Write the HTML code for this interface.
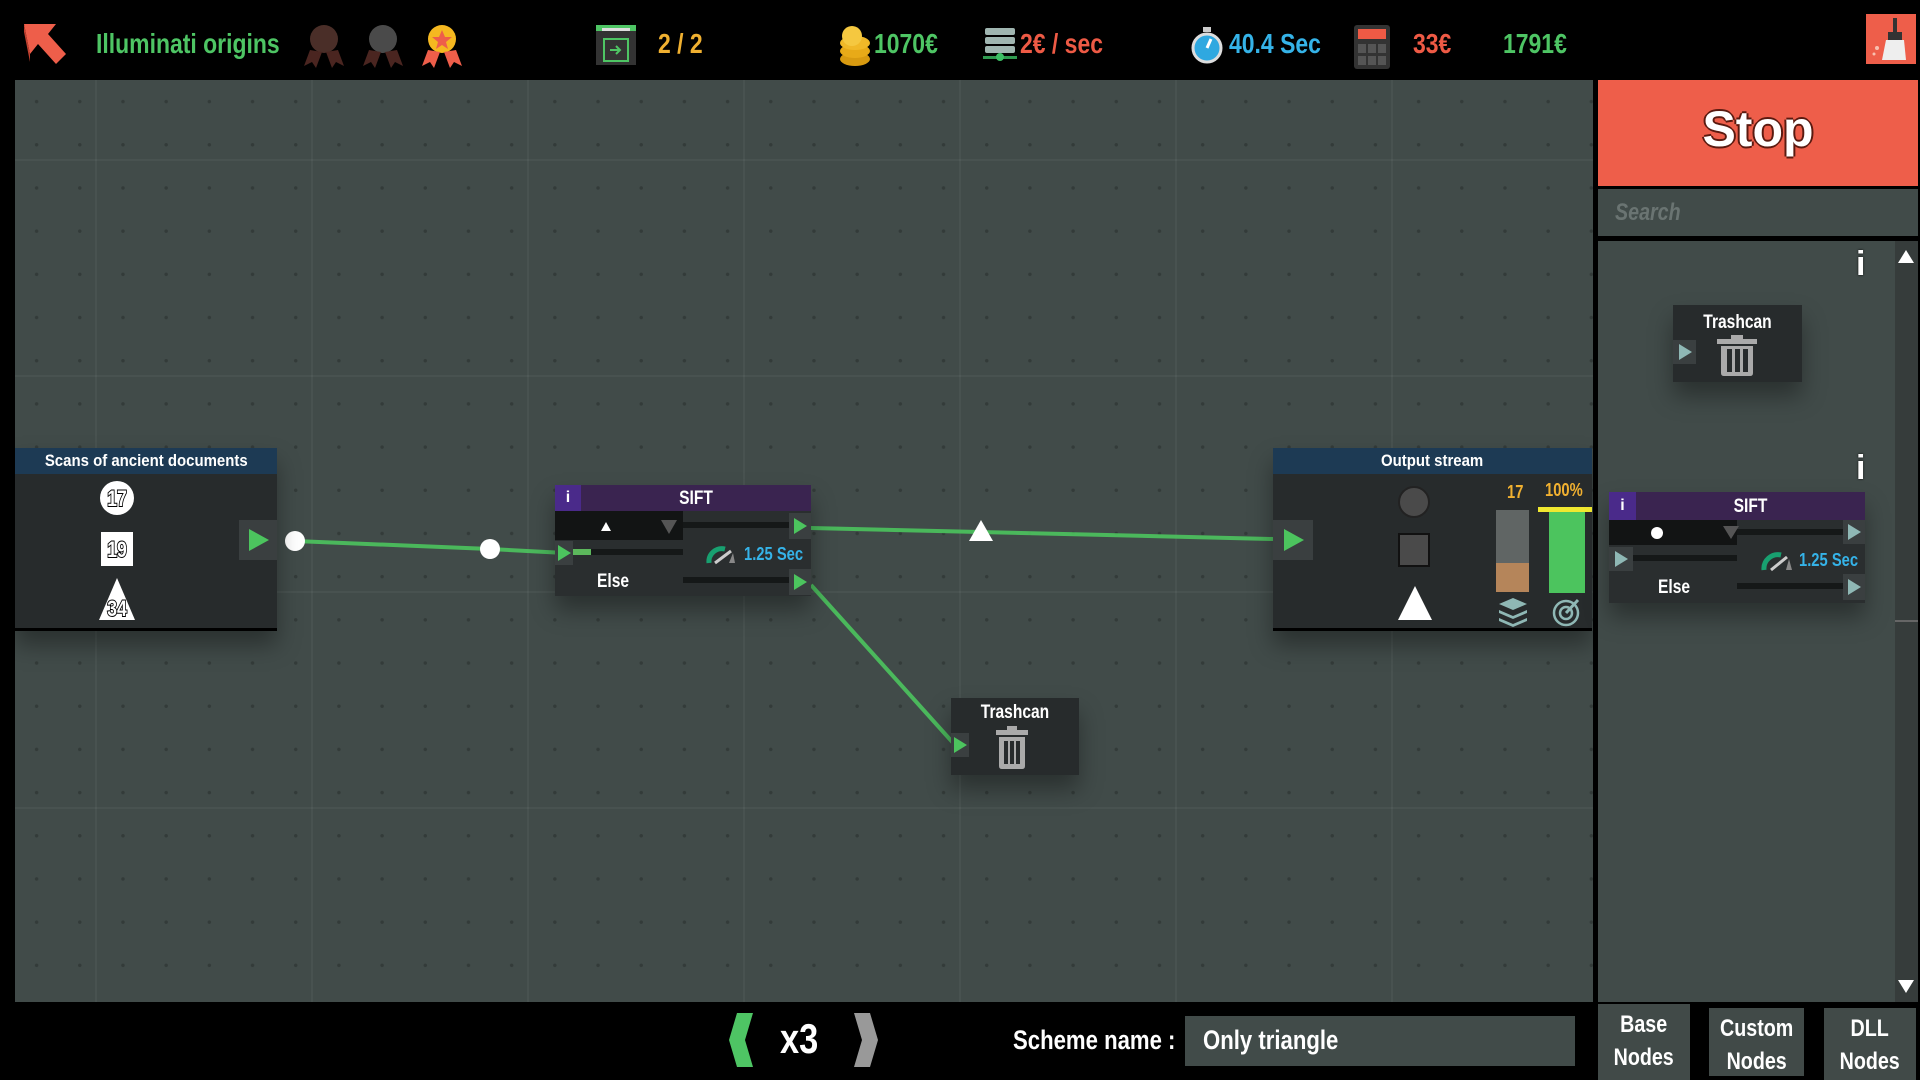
<!DOCTYPE html>
<html><head><meta charset="utf-8"><style>
*{margin:0;padding:0;box-sizing:border-box}
body{width:1920px;height:1080px;background:#000;position:relative;overflow:hidden;font-family:"Liberation Sans",sans-serif;font-weight:bold;color:#fff}
.a{position:absolute}
.t{position:absolute;white-space:nowrap;line-height:1;transform:scaleX(.82);transform-origin:left center}
.c{transform-origin:center center}
#canvas{left:15px;top:80px;width:1578px;height:922px;background-color:#414b49;
background-image:linear-gradient(90deg,rgba(255,255,255,.04) 2px,transparent 2px),linear-gradient(rgba(255,255,255,.04) 2px,transparent 2px),radial-gradient(circle,rgba(0,0,0,.22) 1.5px,transparent 2px);
background-size:216px 216px,216px 216px,43.2px 43.2px;background-position:80px 0,0 79px,0 0}
.node{position:absolute;background:#272b2c;box-shadow:0 14px 22px rgba(0,0,0,.35)}
.hdr{position:absolute;left:0;top:0;right:0;background:#1d3a54;text-align:center;font-size:17px;line-height:26px}
.hdr span{display:inline-block;transform:scaleX(.88)}
.port{position:absolute;background:#3a3f40}
.tri{width:0;height:0;border-top:11px solid transparent;border-bottom:11px solid transparent;border-left:20px solid #4cc45e;position:absolute}
.tris{width:0;height:0;border-top:8px solid transparent;border-bottom:8px solid transparent;border-left:13px solid #4cc45e;position:absolute}
.tab{position:absolute;top:1004px;height:76px;background:#414a48;text-align:center;font-size:24px;line-height:33px;padding-top:4px}
.tab span{display:inline-block;transform:scaleX(.82)}
</style></head><body>

<!-- top bar -->
<svg class="a" style="left:22px;top:22px" width="46" height="44" viewBox="0 0 46 44"><path d="M2 2 L34 2 L26 12 L44 32 L34 42 L16 22 L8 32 Z" fill="#ee5e4a"/><path d="M2 2 L8 32 L8 40 L2 10Z" fill="#c0402f"/></svg>
<div class="t" style="left:96px;top:30px;font-size:28px;color:#4ec564">Illuminati origins</div>
<svg class="a" style="left:300px;top:22px" width="170" height="48">
<g><circle cx="24" cy="17" r="14" fill="#4a2e28"/><path d="M10 28 L4 44 L12 40 L16 46 L22 30Z M38 28 L44 44 L36 40 L32 46 L26 30Z" fill="#4a2520"/></g>
<g transform="translate(59,0)"><circle cx="24" cy="17" r="14" fill="#4a4a4a"/><path d="M10 28 L4 44 L12 40 L16 46 L22 30Z M38 28 L44 44 L36 40 L32 46 L26 30Z" fill="#4a2520"/></g>
<g transform="translate(118,0)"><circle cx="24" cy="17" r="14" fill="#f5b820"/><polygon points="24,8 27,15 34,15 28,20 30,27 24,23 18,27 20,20 14,15 21,15" fill="#ee5e4a"/><path d="M10 28 L4 44 L12 40 L16 46 L22 30Z M38 28 L44 44 L36 40 L32 46 L26 30Z" fill="#ee5e4a"/></g>
</svg>
<svg class="a" style="left:596px;top:25px" width="40" height="40"><rect width="40" height="40" fill="#333"/><rect x="0" y="0" width="40" height="6" fill="#4ec564"/><rect x="6" y="3" width="28" height="3" fill="#ddd"/><rect x="8" y="14" width="24" height="22" fill="none" stroke="#4ec564" stroke-width="2"/><path d="M14 25h10m-4-4l4 4-4 4" stroke="#4ec564" stroke-width="2" fill="none"/></svg>
<div class="t" style="left:658px;top:30px;font-size:28px;color:#f0b030">2 / 2</div>
<svg class="a" style="left:836px;top:25px" width="38" height="42"><ellipse cx="19" cy="34" rx="15" ry="7" fill="#d89a10"/><ellipse cx="19" cy="26" rx="15" ry="7" fill="#e8aa18"/><ellipse cx="19" cy="18" rx="15" ry="7" fill="#f0b828"/><circle cx="16" cy="11" r="10" fill="#f5c840"/></svg>
<div class="t" style="left:874px;top:30px;font-size:28px;color:#4ec564">1070€</div>
<svg class="a" style="left:983px;top:26px" width="34" height="40"><rect x="2" y="2" width="30" height="7" rx="2" fill="#9fb5b0"/><rect x="2" y="11" width="30" height="7" rx="2" fill="#9fb5b0"/><rect x="2" y="20" width="30" height="7" rx="2" fill="#9fb5b0"/><rect x="0" y="30" width="34" height="3" fill="#2f9a50"/><circle cx="17" cy="31" r="4" fill="#3cbf64"/></svg>
<div class="t" style="left:1020px;top:30px;font-size:28px;color:#ee5a45">2€ / sec</div>
<svg class="a" style="left:1190px;top:26px" width="34" height="40"><rect x="13" y="1" width="8" height="5" fill="#ccc"/><circle cx="17" cy="22" r="14" fill="#2fa8e0" stroke="#ddd" stroke-width="3"/><path d="M17 22 L21 13" stroke="#fff" stroke-width="3"/></svg>
<div class="t" style="left:1229px;top:30px;font-size:28px;color:#35b3e8">40.4 Sec</div>
<svg class="a" style="left:1354px;top:25px" width="36" height="44"><rect width="36" height="44" rx="3" fill="#333"/><rect x="4" y="4" width="28" height="10" fill="#ee5a45"/><g fill="#555"><rect x="4" y="19" width="8" height="9"/><rect x="14" y="19" width="8" height="9"/><rect x="24" y="19" width="8" height="9"/><rect x="4" y="31" width="8" height="9"/><rect x="14" y="31" width="8" height="9"/><rect x="24" y="31" width="8" height="9"/></g></svg>
<div class="t" style="left:1413px;top:30px;font-size:28px;color:#ee5a45">33€</div>
<div class="t" style="left:1503px;top:30px;font-size:28px;color:#4ec564">1791€</div>
<div class="a" style="left:1866px;top:14px;width:50px;height:50px;background:#ee5e4a"></div>
<svg class="a" style="left:1866px;top:14px" width="50" height="50"><rect x="27" y="4" width="4" height="16" fill="#333"/><rect x="22" y="18" width="14" height="8" fill="#333"/><path d="M20 26 L38 26 L40 46 L16 46Z" fill="#eee"/><circle cx="11" cy="34" r="2" fill="#f8c0b0"/><circle cx="8" cy="40" r="1.5" fill="#f8c0b0"/></svg>

<!-- canvas -->
<div class="a" id="canvas"></div>
<svg class="a" style="left:0;top:0" width="1600" height="1010">
<g stroke="#4cc45e" stroke-width="4" fill="none" opacity=".9">
<line x1="295" y1="541" x2="490" y2="549"/><line x1="490" y1="549" x2="565" y2="553"/>
<line x1="811" y1="528" x2="1273" y2="539"/>
<line x1="811" y1="585" x2="955" y2="745"/>
</g>
<circle cx="295" cy="541" r="10" fill="#fff"/><circle cx="490" cy="549" r="10" fill="#fff"/>
<polygon points="981,520 993,541 969,541" fill="#fff"/>
</svg>

<!-- source node -->
<div class="node" style="left:15px;top:448px;width:262px;height:183px;border-bottom:3px solid #000">
<div class="hdr"><span>Scans of ancient documents</span></div>
<svg class="a" style="left:80px;top:30px" width="44" height="150">
<circle cx="22" cy="20" r="17" fill="#fff"/><text x="22" y="28" text-anchor="middle" font-size="22" font-family="Liberation Sans,sans-serif" font-weight="bold" fill="#fff" stroke="#000" stroke-width="2" paint-order="stroke" transform="translate(22,0) scale(.8,1) translate(-22,0)">17</text>
<rect x="6" y="54" width="32" height="34" fill="#fff"/><text x="22" y="79" text-anchor="middle" font-size="22" font-family="Liberation Sans,sans-serif" font-weight="bold" fill="#fff" stroke="#000" stroke-width="2" paint-order="stroke" transform="translate(22,0) scale(.8,1) translate(-22,0)">19</text>
<polygon points="22,100 40,142 4,142" fill="#fff"/><text x="22" y="138" text-anchor="middle" font-size="22" font-family="Liberation Sans,sans-serif" font-weight="bold" fill="#fff" stroke="#000" stroke-width="2" paint-order="stroke" transform="translate(22,0) scale(.8,1) translate(-22,0)">34</text>
</svg>
<div class="port" style="left:224px;top:72px;width:38px;height:40px"><div class="tri" style="left:10px;top:9px"></div></div>
</div>

<!-- SIFT node -->
<div class="node" style="left:555px;top:485px;width:256px;height:111px;background:#2a2e2f">
<div class="a" style="left:0;top:0;width:256px;height:26px;background:#3a2450"></div>
<div class="a" style="left:0;top:0;width:26px;height:26px;background:#4a2a8a;font-size:16px;line-height:26px;text-align:center">i</div>
<div class="t c" style="left:26px;width:230px;top:4px;text-align:center;font-size:19px">SIFT</div>
<div class="a" style="left:0;top:26px;width:128px;height:29px;background:#121414"></div>
<div class="a" style="left:46px;top:37px;border-left:5px solid transparent;border-right:5px solid transparent;border-bottom:9px solid #fff"></div>
<div class="a" style="left:106px;top:35px;border-left:8px solid transparent;border-right:8px solid transparent;border-top:14px solid #555"></div>
<div class="a" style="left:128px;top:37px;width:106px;height:6px;background:#151818"></div>
<div class="port" style="left:234px;top:28px;width:22px;height:26px"><div class="tris" style="left:5px;top:5px"></div></div>
<div class="port" style="left:0;top:56px;width:18px;height:24px"><div class="tris" style="left:3px;top:4px"></div></div>
<div class="a" style="left:18px;top:64px;width:110px;height:6px;background:#151818"></div>
<div class="a" style="left:18px;top:64px;width:18px;height:6px;background:#5cb85c"></div>
<svg class="a" style="left:150px;top:56px" width="32" height="24"><path d="M4 22 A13 13 0 0 1 20 8" stroke="#18a070" stroke-width="5" fill="none"/><path d="M10 22 L26 10" stroke="#ccc" stroke-width="3"/><polygon points="24,22 28,12 30,22" fill="#888"/></svg>
<div class="t" style="left:189px;top:60px;font-size:18px;color:#35b3e8">1.25 Sec</div>
<div class="t" style="left:42px;top:87px;font-size:19px">Else</div>
<div class="a" style="left:128px;top:92px;width:106px;height:6px;background:#151818"></div>
<div class="port" style="left:234px;top:84px;width:22px;height:26px"><div class="tris" style="left:5px;top:5px"></div></div>
</div>

<!-- output stream -->
<div class="node" style="left:1273px;top:448px;width:319px;height:183px;border-bottom:3px solid #000">
<div class="hdr"><span>Output stream</span></div>
<div class="port" style="left:0;top:72px;width:40px;height:40px"><div class="tri" style="left:11px;top:9px"></div></div>
<div class="a" style="left:125px;top:38px;width:32px;height:32px;border-radius:50%;background:#4a4a4a;border:2px solid #222"></div>
<div class="a" style="left:125px;top:85px;width:32px;height:34px;background:#4a4a4a;border:2px solid #111"></div>
<div class="a" style="left:125px;top:138px;border-left:17px solid transparent;border-right:17px solid transparent;border-bottom:34px solid #fff"></div>
<div class="t" style="left:234px;top:35px;font-size:18px;color:#f0b030">17</div>
<div class="t" style="left:272px;top:33px;font-size:18px;color:#f0b030">100%</div>
<div class="a" style="left:223px;top:62px;width:33px;height:53px;background:#606564"></div>
<div class="a" style="left:223px;top:115px;width:33px;height:29px;background:#b5855a"></div>
<div class="a" style="left:265px;top:59px;width:54px;height:5px;background:#f0e830"></div>
<div class="a" style="left:276px;top:64px;width:36px;height:81px;background:#4cc45e"></div>
<svg class="a" style="left:224px;top:148px" width="32" height="32"><g fill="#8fb8b5"><path d="M16 2 L30 8 L16 14 L2 8Z"/><path d="M2 14 L16 20 L30 14 L30 17 L16 23 L2 17Z"/><path d="M2 22 L16 28 L30 22 L30 25 L16 31 L2 25Z"/></g></svg>
<svg class="a" style="left:278px;top:148px" width="32" height="32"><circle cx="15" cy="17" r="12" stroke="#8fb8b5" stroke-width="2.5" fill="none"/><circle cx="15" cy="17" r="6" stroke="#8fb8b5" stroke-width="2.5" fill="none"/><path d="M15 17 L27 4" stroke="#8fb8b5" stroke-width="3"/></svg>
</div>

<!-- trashcan -->
<div class="node" style="left:951px;top:698px;width:128px;height:77px">
<div class="t c" style="left:0;width:128px;text-align:center;top:5px;font-size:19px">Trashcan</div>
<div class="port" style="left:0;top:35px;width:18px;height:24px"><div class="tris" style="left:3px;top:4px"></div></div>
<svg class="a" style="left:44px;top:28px" width="34" height="44"><rect x="12" y="0" width="10" height="4" fill="#aaa"/><rect x="1" y="4" width="32" height="5" fill="#aaa"/><path d="M4 11 H30 V40 Q30 43 27 43 H7 Q4 43 4 40Z" fill="#aaa"/><g fill="#272b2c"><rect x="9" y="15" width="4" height="23"/><rect x="15" y="15" width="4" height="23"/><rect x="21" y="15" width="4" height="23"/></g></svg>
</div>

<!-- right panel -->
<div class="a" style="left:1598px;top:80px;width:320px;height:106px;background:#ee5e4a"></div>
<div class="t c" style="left:1598px;width:320px;text-align:center;top:104px;font-size:50px;color:#fff;transform:none;text-shadow:-2px 0 #5a1a10,2px 0 #5a1a10,0 2px #5a1a10,0 -2px #5a1a10">Stop</div>
<div class="a" style="left:1598px;top:189px;width:320px;height:47px;background:#414b49"></div>
<div class="t" style="left:1615px;top:201px;font-size:24px;color:#6a7472;font-style:italic">Search</div>
<div class="a" style="left:1598px;top:241px;width:297px;height:761px;background:#414b49"></div>
<div class="a" style="left:1895px;top:241px;width:23px;height:761px;background:#363c3b"></div>
<div class="a" style="left:1898px;top:250px;border-left:8px solid transparent;border-right:8px solid transparent;border-bottom:13px solid #fff"></div>
<div class="a" style="left:1898px;top:980px;border-left:8px solid transparent;border-right:8px solid transparent;border-top:13px solid #fff"></div>
<div class="a" style="left:1895px;top:620px;width:23px;height:2px;background:#666"></div>
<div class="t" style="left:1856px;top:247px;font-size:34px;color:#fff;transform:none;text-shadow:0 0 2px #000">i</div>
<div class="t" style="left:1856px;top:451px;font-size:34px;color:#fff;transform:none;text-shadow:0 0 2px #000">i</div>

<div class="node" style="left:1673px;top:305px;width:129px;height:77px">
<div class="t c" style="left:0;width:129px;text-align:center;top:8px;font-size:19px">Trashcan</div>
<div class="port" style="left:0;top:35px;width:23px;height:24px"><div class="tris" style="left:6px;top:4px;border-left-color:#8fb8b5"></div></div>
<svg class="a" style="left:44px;top:30px" width="42" height="42"><rect x="14" y="0" width="12" height="4" fill="#aaa"/><rect x="0" y="4" width="40" height="5" fill="#aaa"/><path d="M4 11 H36 V38 Q36 41 33 41 H7 Q4 41 4 38Z" fill="#aaa"/><g fill="#272b2c"><rect x="10" y="14" width="5" height="23"/><rect x="18" y="14" width="5" height="23"/><rect x="26" y="14" width="5" height="23"/></g></svg>
</div>

<div class="node" style="left:1609px;top:492px;width:256px;height:111px;background:#2a2e2f">
<div class="a" style="left:0;top:0;width:256px;height:28px;background:#3a2450"></div>
<div class="a" style="left:0;top:0;width:27px;height:28px;background:#4a2a8a;font-size:16px;line-height:28px;text-align:center">i</div>
<div class="t c" style="left:27px;width:229px;top:5px;text-align:center;font-size:19px">SIFT</div>
<div class="a" style="left:0;top:28px;width:128px;height:25px;background:#121414"></div>
<div class="a" style="left:42px;top:35px;width:12px;height:12px;border-radius:50%;background:#fff"></div>
<div class="a" style="left:114px;top:34px;border-left:8px solid transparent;border-right:8px solid transparent;border-top:13px solid #555"></div>
<div class="a" style="left:128px;top:37px;width:106px;height:6px;background:#151818"></div>
<div class="port" style="left:234px;top:28px;width:22px;height:24px"><div class="tris" style="left:5px;top:4px;border-left-color:#8fb8b5"></div></div>
<div class="port" style="left:0;top:55px;width:24px;height:24px"><div class="tris" style="left:6px;top:4px;border-left-color:#8fb8b5"></div></div>
<div class="a" style="left:24px;top:63px;width:104px;height:6px;background:#151818"></div>
<svg class="a" style="left:151px;top:54px" width="34" height="26"><path d="M4 24 A14 14 0 0 1 21 9" stroke="#18a070" stroke-width="5" fill="none"/><path d="M11 24 L27 11" stroke="#ccc" stroke-width="3"/><polygon points="26,24 29,13 32,24" fill="#888"/></svg>
<div class="t" style="left:190px;top:59px;font-size:18px;color:#35b3e8">1.25 Sec</div>
<div class="t" style="left:49px;top:86px;font-size:19px">Else</div>
<div class="a" style="left:128px;top:91px;width:106px;height:6px;background:#151818"></div>
<div class="port" style="left:234px;top:82px;width:22px;height:26px"><div class="tris" style="left:5px;top:5px;border-left-color:#8fb8b5"></div></div>
</div>

<!-- bottom -->
<svg class="a" style="left:727px;top:1013px" width="30" height="54"><polygon points="10,0 26,0 18,27 26,54 10,54 2,27" fill="#4ec564"/></svg>
<div class="t" style="left:780px;top:1018px;font-size:42px">x3</div>
<svg class="a" style="left:850px;top:1013px" width="30" height="54"><polygon points="4,0 20,0 28,27 20,54 4,54 12,27" fill="#999"/></svg>
<div class="t" style="left:1013px;top:1027px;font-size:27px">Scheme name :</div>
<div class="a" style="left:1185px;top:1016px;width:390px;height:50px;background:#414b49"></div>
<div class="t" style="left:1203px;top:1027px;font-size:27px">Only triangle</div>
<div class="tab" style="left:1598px;width:92px"><span>Base<br>Nodes</span></div>
<div class="tab" style="left:1709px;width:95px;top:1008px;height:68px"><span>Custom<br>Nodes</span></div>
<div class="tab" style="left:1824px;width:92px;top:1008px;height:72px"><span>DLL<br>Nodes</span></div>
</body></html>
